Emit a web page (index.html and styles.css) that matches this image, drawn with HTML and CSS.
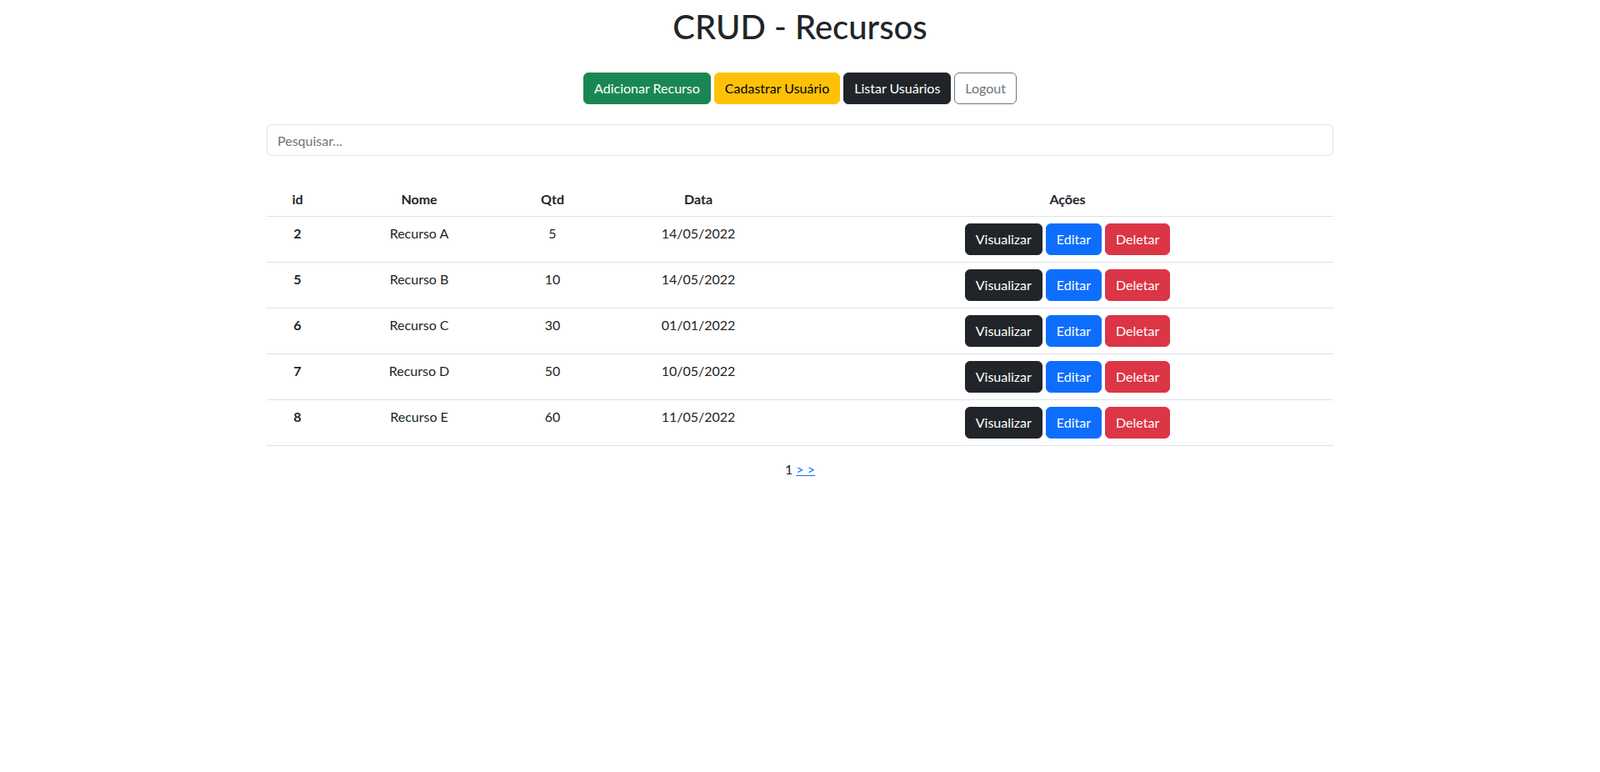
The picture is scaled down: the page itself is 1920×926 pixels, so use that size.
FILE: index.html
```html
<!DOCTYPE html>
<html lang="pt-BR">
<head>
<meta charset="utf-8">
<title>CRUD - Recursos</title>
<link rel="stylesheet" href="styles.css">
</head>
<body>
<div class="page">
  <h1 class="title">CRUD - Recursos</h1>
  <div class="toolbar">
    <a class="btn btn-success">Adicionar Recurso</a>
    <a class="btn btn-warning">Cadastrar Usuário</a>
    <a class="btn btn-dark">Listar Usuários</a>
    <a class="btn btn-outline">Logout</a>
  </div>
  <input class="search" type="text" placeholder="Pesquisar...">
  <table class="table">
    <colgroup>
      <col class="c-id"><col class="c-nome"><col class="c-qtd"><col class="c-data"><col class="c-acoes">
    </colgroup>
    <thead>
      <tr><th>id</th><th>Nome</th><th>Qtd</th><th>Data</th><th>Ações</th></tr>
    </thead>
    <tbody>
      <tr><th>2</th><td>Recurso A</td><td>5</td><td>14/05/2022</td><td><div class="actions"><a class="btn btn-dark">Visualizar</a><a class="btn btn-primary">Editar</a><a class="btn btn-danger">Deletar</a></div></td></tr>
      <tr><th>5</th><td>Recurso B</td><td>10</td><td>14/05/2022</td><td><div class="actions"><a class="btn btn-dark">Visualizar</a><a class="btn btn-primary">Editar</a><a class="btn btn-danger">Deletar</a></div></td></tr>
      <tr><th>6</th><td>Recurso C</td><td>30</td><td>01/01/2022</td><td><div class="actions"><a class="btn btn-dark">Visualizar</a><a class="btn btn-primary">Editar</a><a class="btn btn-danger">Deletar</a></div></td></tr>
      <tr><th>7</th><td>Recurso D</td><td>50</td><td>10/05/2022</td><td><div class="actions"><a class="btn btn-dark">Visualizar</a><a class="btn btn-primary">Editar</a><a class="btn btn-danger">Deletar</a></div></td></tr>
      <tr><th>8</th><td>Recurso E</td><td>60</td><td>11/05/2022</td><td><div class="actions"><a class="btn btn-dark">Visualizar</a><a class="btn btn-primary">Editar</a><a class="btn btn-danger">Deletar</a></div></td></tr>
    </tbody>
  </table>
  <div class="pager">1 <a class="pager-link" href="#">&gt; &gt;</a></div>
</div>
</body>
</html>
```

FILE: styles.css
```css
* { box-sizing: border-box; }
body {
  margin: 0;
  font-family: Lato, "Liberation Sans", sans-serif;
  font-size: 16px;
  line-height: 24px;
  color: #212529;
  background: #fff;
}
.page {
  width: 1280px;
  margin: 0 auto;
  padding-top: 8px;
}
.title {
  margin: 0;
  font-size: 40px;
  line-height: 48px;
  font-weight: 500;
  text-align: center;
}
.toolbar {
  display: flex;
  justify-content: center;
  gap: 4px;
  margin-top: 31px;
}
.btn {
  display: inline-block;
  padding: 6px 12px;
  font-size: 16px;
  line-height: 24px;
  border: 1px solid transparent;
  border-radius: 6px;
  color: #fff;
  text-decoration: none;
  white-space: nowrap;
}
.btn-success { background: #198754; border-color: #198754; }
.btn-warning { background: #ffc107; border-color: #ffc107; color: #000; }
.btn-dark { background: #212529; border-color: #212529; }
.btn-primary { background: #0d6efd; border-color: #0d6efd; }
.btn-danger { background: #dc3545; border-color: #dc3545; }
.btn-outline { background: #fff; border-color: #6c757d; color: #6c757d; }
.search {
  display: block;
  width: 100%;
  height: 38px;
  margin-top: 24px;
  padding: 6px 12px;
  font-family: inherit;
  font-size: 16px;
  line-height: 24px;
  color: #212529;
  border: 1px solid #dee2e6;
  border-radius: 6px;
  outline: none;
}
.search::placeholder { color: #6c757d; }
.table {
  width: 100%;
  margin-top: 32px;
  border-collapse: collapse;
  table-layout: fixed;
}
.c-id { width: 74px; }
.c-nome { width: 218px; }
.c-qtd { width: 102px; }
.c-data { width: 248px; }
.c-acoes { width: 638px; }
.table th, .table td {
  padding: 8px;
  text-align: center;
  vertical-align: top;
  border-bottom: 1px solid #dee2e6;
}
.table th { font-weight: 700; }
.table td { font-weight: 400; }
.actions {
  display: flex;
  justify-content: center;
  gap: 4px;
}
.pager {
  margin-top: 16px;
  text-align: center;
}
.pager-link { color: #0d6efd; text-decoration: underline; }
```
